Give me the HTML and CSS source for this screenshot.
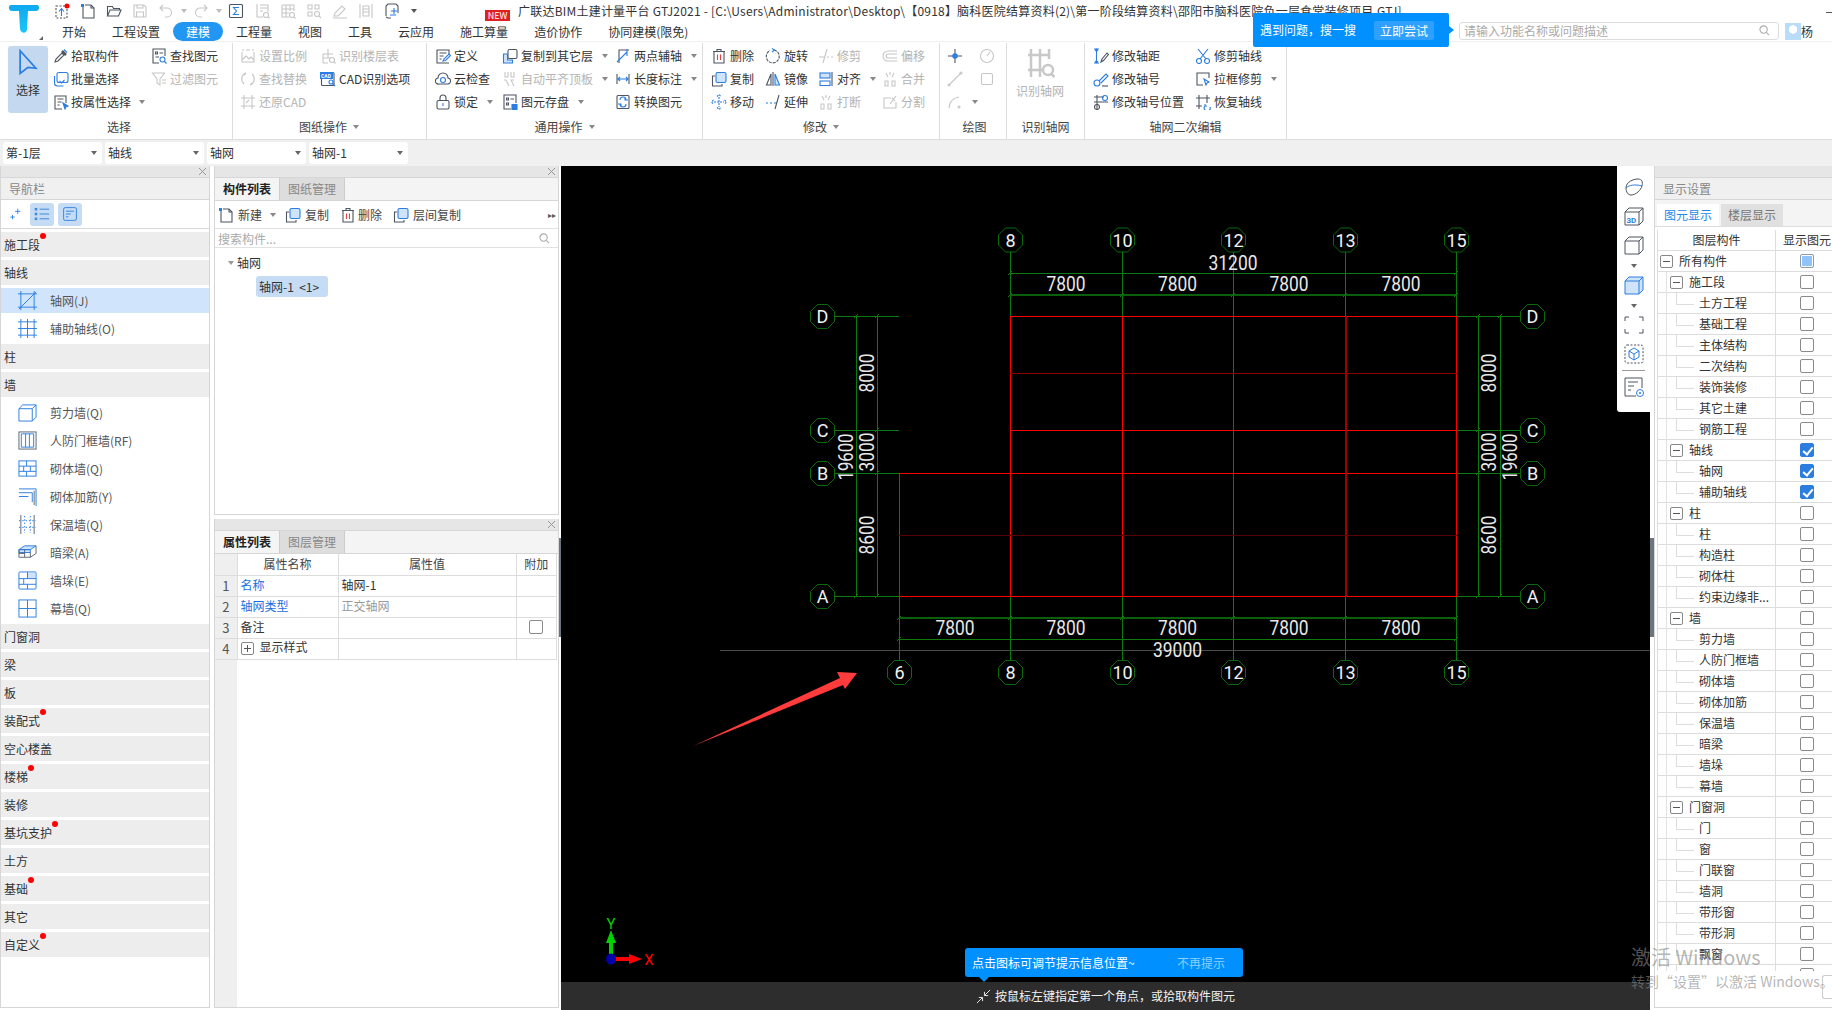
FILE: index.html
```html
<!DOCTYPE html>
<html lang="zh-CN">
  <head>
    <meta charset="UTF-8" />
    <title>广联达BIM土建计量平台 GTJ2021</title>
    <link rel="stylesheet" href="styles.css">
  </head>
  <body>
    <!-- icon sprite -->
    <svg class="sprite" width="0" height="0">
      <symbol id="i-pin" viewBox="0 0 16 16"><rect x="2" y="3" width="11" height="12" stroke-dasharray="2 1.5"/><path class="b" d="M7.5 13V6M5 8.500l2.500-3 2.500 3"/><circle cx="13" cy="3" r="2.500" fill="#f00" stroke="none"/></symbol>
      <symbol id="i-new" viewBox="0 0 16 16"><path d="M3 4v11h11V5l-3-3H5"/><path d="M11 2v3h3"/><rect x="1" y="1" width="3" height="3" fill="#2b7de0" stroke="none"/></symbol>
      <symbol id="i-open" viewBox="0 0 16 16"><path d="M1.500 13V3.500h5l1 2h6v2M1.500 13l2.500-6h11l-2.500 6z"/></symbol>
      <symbol id="i-save" viewBox="0 0 16 16"><path d="M2 2h10l2 2v10H2zM5 2v3h6V2M4.500 14V9h7v5"/></symbol>
      <symbol id="i-undo" viewBox="0 0 16 16"><path d="M5 2L2 5l3 3M2 5h7a4.500 4.500 0 010 9H7"/></symbol>
      <symbol id="i-redo" viewBox="0 0 16 16"><path d="M11 2l3 3-3 3M14 5H7a4.500 4.500 0 000 9h2"/></symbol>
      <symbol id="i-sum" viewBox="0 0 16 16"><rect x="1.500" y="1.500" width="13" height="13" rx="1"/><path class="b" d="M11 4.500H5.500L8.500 8l-3 3.500H11"/></symbol>
      <symbol id="i-tbl" viewBox="0 0 16 16"><path d="M3 1v13h6M6 2h8v7M6 5h8M6 8h3"/><circle cx="12" cy="12" r="2.500"/><path d="M14 14l1.500 1.500"/></symbol>
      <symbol id="i-gridq" viewBox="0 0 16 16"><path d="M2 2h12v6M2 2v12h7M6 2v12M10 2v6M2 6h12M2 10h7"/><circle cx="12" cy="12" r="2.500"/><path d="M14 14l1.500 1.500"/></symbol>
      <symbol id="i-gridq2" viewBox="0 0 16 16"><path d="M2 2h4v4H2zM9 2h4v4H9zM2 9h4v4H2z"/><circle cx="11" cy="11" r="2.500"/><path d="M13 13l2 2"/></symbol>
      <symbol id="i-pen" viewBox="0 0 16 16"><path d="M2 13l1-3 7-7 3 3-7 7zM1 15h14"/></symbol>
      <symbol id="i-cols" viewBox="0 0 16 16"><path d="M2 1v14M14 1v14M5 3h6v10H5zM5 6h6M5 9h6"/></symbol>
      <symbol id="i-frame" viewBox="0 0 16 16"><path d="M2 13V3l2-2h8l2 2v7M2 14l2 1h3"/><path class="b" d="M7 8h6M10 5v6M6 12h6"/></symbol>
      <symbol id="i-pick" viewBox="0 0 16 16"><path d="M2 14l1-3 6-6 2 2-6 6z"/><path d="M9 3l4 4" stroke-width="2.500"/><path class="b" d="M11 1.500l3 3"/></symbol>
      <symbol id="i-batch" viewBox="0 0 16 16"><rect class="b" x="4" y="1.500" width="11" height="10" rx="2"/><path class="b" d="M1.500 5v7c0 2 1 3 3 3h6M6.500 10l2 2 3-3"/></symbol>
      <symbol id="i-attr" viewBox="0 0 16 16"><path d="M13 9V2H2v13h7M4.500 5h6M4.500 8h4M4.500 11h2"/><path class="b" d="M10 9l5 3-2 .8-1 2.200z" fill="#2b7de0"/></symbol>
      <symbol id="i-find" viewBox="0 0 16 16"><path d="M8 15H2V1h12v7M4.500 4h2v2h-2zM8.500 5H12M4.500 9H8"/><circle class="b" cx="11.500" cy="11.500" r="2.500"/><path class="b" d="M13.500 13.500L15.500 15.500"/></symbol>
      <symbol id="i-filter" viewBox="0 0 16 16"><path d="M1.500 2h12L9 8v6l-3-2V8zM11 9h4M11 12h4"/></symbol>
      <symbol id="i-scale" viewBox="0 0 16 16"><path d="M2 4v10h12V4M2 2h2M6 2h4M12 2h2M2 12l4-4 3 3 2-2 3 3"/></symbol>
      <symbol id="i-floor" viewBox="0 0 16 16"><path d="M8 1v9M3 6h10M3 6v9M3 10h7M8 15H3"/><circle cx="12" cy="12" r="2.500"/><path d="M14 14l1.500 1.500"/></symbol>
      <symbol id="i-replace" viewBox="0 0 16 16"><path d="M6 2a6.500 6.500 0 00-2 11M10 14a6.500 6.500 0 002-11M6 2l-2 2M10 14l2-2"/></symbol>
      <symbol id="i-cad" viewBox="0 0 16 16"><rect x="1.500" y="1.500" width="12.500" height="13" rx="1"/><rect x="0" y="1" width="13" height="7" fill="#2b7de0" stroke="none"/><circle class="b" cx="11" cy="11" r="2"/><path class="b" d="M12.500 12.500L15 15"/></symbol>
      <symbol id="i-restore" viewBox="0 0 16 16"><path d="M4 1v14M12 1v14M1 4h14M1 12h14M6 9l3-3"/></symbol>
      <symbol id="i-define" viewBox="0 0 16 16"><path d="M14 6V2H2v13h12M4.500 5h7M4.500 8h4M4.500 11h2"/><path class="b" d="M8 13l1-2 5-5 1.500 1.500-5 5z"/></symbol>
      <symbol id="i-cloud" viewBox="0 0 16 16"><path d="M4 13a3 3 0 01-1-6 5 5 0 0110 0 3 3 0 01-1 6z"/><circle class="b" cx="8" cy="9" r="2.500"/></symbol>
      <symbol id="i-lock" viewBox="0 0 16 16"><rect x="2" y="6.500" width="12" height="8.500" rx="1.500"/><path d="M5 6.500V4a3 3 0 016 0v2.500"/><path class="b" d="M8 9v3"/></symbol>
      <symbol id="i-copyto" viewBox="0 0 16 16"><rect x="6" y="1.500" width="9" height="9" rx="1.500"/><path class="b" d="M1.500 6h4v6h5v3h-9z" fill="#cfe4fb"/></symbol>
      <symbol id="i-align" viewBox="0 0 16 16"><path d="M3 1v5h3V1M9 1v5h3V1M2 9h2l3 6M12 15l-3-6h3"/></symbol>
      <symbol id="i-store" viewBox="0 0 16 16"><path d="M9 15H2V1h12v8M4.500 4h2v2h-2zM8.500 5H12M4.500 9h2v2h-2z"/><rect class="b" x="10" y="10.500" width="5" height="5" fill="#2b7de0"/></symbol>
      <symbol id="i-twop" viewBox="0 0 16 16"><path d="M4 15V2h10"/><path class="b" d="M2 14L12 4M12 1v7"/></symbol>
      <symbol id="i-len" viewBox="0 0 16 16"><path d="M2 3v10M14 3v10"/><path class="b" d="M3 8h10M5 6L3 8l2 2M11 6l2 2-2 2"/></symbol>
      <symbol id="i-conv" viewBox="0 0 16 16"><rect x="2" y="1.500" width="12" height="13" rx="1"/><path class="b" d="M5 6a3 3 0 016 0M11 10a3 3 0 01-6 0M10 3v3h3M6 13v-3H3"/></symbol>
      <symbol id="i-del" viewBox="0 0 16 16"><path d="M2 3.500h12M6 3.500V1.500h4v2M3 3.500V15h10V3.500"/><path d="M6.500 6.500v5.500M9.500 6.500v5.500" stroke="#e04040"/></symbol>
      <symbol id="i-copy" viewBox="0 0 16 16"><rect class="b" x="5" y="1.500" width="10" height="10" rx="1.500" fill="#cfe4fb"/><path d="M4 5H1.500v10H11v-2"/></symbol>
      <symbol id="i-move" viewBox="0 0 16 16"><path class="b" d="M8 3v10M3 8h10M6 2.500L8 .5l2 2M6 13.500l2 2 2-2M2.500 6L.5 8l2 2M13.500 6l2 2-2 2" stroke-dasharray="2 1"/></symbol>
      <symbol id="i-rot" viewBox="0 0 16 16"><path d="M9 2a6.500 6.500 0 11-4 .5" stroke-dasharray="3 1"/><path class="b" d="M7 .5L9.500 2 7 4"/></symbol>
      <symbol id="i-mirror" viewBox="0 0 16 16"><path d="M8 1v14"/><path d="M6 3L1.500 14H6z"/><path class="b" d="M10 3l4.500 11H10z" fill="#cfe4fb"/></symbol>
      <symbol id="i-extend" viewBox="0 0 16 16"><path class="b" d="M1 9h2M5 9h2M9 9h3"/><path d="M10 15l4-14"/></symbol>
      <symbol id="i-trim" viewBox="0 0 16 16"><path d="M1 9h5M9 9h2M13 9h2M5 15l4-14"/></symbol>
      <symbol id="i-alignb" viewBox="0 0 16 16"><path d="M14 1v14"/><rect class="b" x="2" y="2" width="10" height="5" fill="#cfe4fb"/><rect class="b" x="2" y="10" width="10" height="4.500"/></symbol>
      <symbol id="i-break" viewBox="0 0 16 16"><path d="M3 15V10h3v5zM10 15V10h3v5zM4 2l2 4M12 2l-2 4M8 1v3"/></symbol>
      <symbol id="i-off" viewBox="0 0 16 16"><path d="M15 3H6a5 5 0 000 10h9M15 6H6a2 2 0 000 4h9"/></symbol>
      <symbol id="i-split" viewBox="0 0 16 16"><path d="M14 8v6H2V4h7M8 10l6-8M10 4l3 3"/></symbol>
      <symbol id="i-pt" viewBox="0 0 16 16"><path d="M1 8h5M10 8h5M8 1v5M8 10v5"/><circle class="b" cx="8" cy="8" r="2.200" fill="#2b7de0"/></symbol>
      <symbol id="i-dial" viewBox="0 0 16 16"><circle cx="8" cy="8" r="6.500"/><path d="M8 8l3-4"/></symbol>
      <symbol id="i-line" viewBox="0 0 16 16"><path d="M2 14L14 2"/><circle cx="14" cy="2" r="1"/><circle cx="2" cy="14" r="1"/></symbol>
      <symbol id="i-sq" viewBox="0 0 16 16"><rect x="2.500" y="2.500" width="11" height="11" rx="1.500"/></symbol>
      <symbol id="i-arc" viewBox="0 0 16 16"><path d="M2 14A11 11 0 0112 3"/><circle cx="12" cy="13" r="1"/></symbol>
      <symbol id="i-rec" viewBox="0 0 30 32"><path d="M6 2v28M15 2v28M3 8h21M3 23h14M24 2v10" stroke-width="2.500"/><circle cx="23" cy="23" r="5" stroke-width="2.500"/><path d="M26.500 27l3 3" stroke-width="2.500"/></symbol>
      <symbol id="i-dist" viewBox="0 0 16 16"><path class="b" d="M1 1h5M1 15h5M3.500 1v14M2 3l1.500-2L5 3M2 13l1.500 2L5 13"/><path d="M8 14l1-3 5-6 1.500 1.500-5 6z"/></symbol>
      <symbol id="i-num" viewBox="0 0 16 16"><circle class="b" cx="4" cy="12" r="3"/><path class="b" d="M6 10l7-7 2 2-7 7"/><path d="M9 15h6"/></symbol>
      <symbol id="i-numpos" viewBox="0 0 16 16"><path d="M1 3h10M1 8h14M4 1v14"/><circle class="b" cx="12" cy="4" r="2.500"/><circle cx="4" cy="13" r="2.500"/></symbol>
      <symbol id="i-scissor" viewBox="0 0 16 16"><path class="b" d="M3 1l8 10M13 1L5 11"/><circle class="b" cx="4" cy="13" r="2.500"/><circle class="b" cx="12" cy="13" r="2.500"/></symbol>
      <symbol id="i-box" viewBox="0 0 16 16"><path d="M14 7V2H2v12h6"/><path class="b" d="M9 8l5 3-2 1-1 2z"/></symbol>
      <symbol id="i-recov" viewBox="0 0 16 16"><path d="M4 1v14M12 1v8M1 4h14M1 12h6"/><path class="b" d="M10 12a3 3 0 105 1M10 10v2h2"/></symbol>
      <symbol id="i-sparkle" viewBox="0 0 16 16"><path class="b" d="M10 2v6M7 5h6M4 9v5M1.500 11.500h5"/></symbol>
      <symbol id="i-list" viewBox="0 0 20 20"><path class="b" d="M7 4h12M7 10h12M7 16h12"/><rect class="b" x="1.500" y="3" width="2" height="2"/><rect class="b" x="1.500" y="9" width="2" height="2"/><rect class="b" x="1.500" y="15" width="2" height="2"/></symbol>
      <symbol id="i-doc" viewBox="0 0 20 20"><rect class="b" x="2" y="2" width="16" height="16" rx="2"/><path class="b" d="M5 6.500h10M5 10h6M5 13.500h3"/></symbol>
      <symbol id="n-axis" viewBox="0 0 20 20"><path class="b" d="M0 3h20M0 17h20M3 0v20M17 0v20M1 19L19 1"/></symbol>
      <symbol id="n-aux" viewBox="0 0 20 20"><path class="b" d="M0 3h20M0 10h20M0 17h20M3 0v20M10 0v20M17 0v20"/></symbol>
      <symbol id="n-shear" viewBox="0 0 20 20"><path class="b" d="M1 6h14v13H1zM1 6l4-4h14v13l-4 4M15 6l4-4"/></symbol>
      <symbol id="n-door" viewBox="0 0 20 20"><rect x="1" y="1" width="18" height="18"/><path class="b" d="M3.500 3h13v14h-13zM8 3v14M12 3v14"/></symbol>
      <symbol id="n-brick" viewBox="0 0 20 20"><rect class="b" x="1" y="2" width="18" height="16"/><path class="b" d="M1 7.500h18M1 13h18M9 2v5.500M6 7.500V13M13 7.500V13M9 13v5"/></symbol>
      <symbol id="n-rebar" viewBox="0 0 20 20"><path class="b" d="M1 2h18v18M1 6h14v10M1 10h10"/><path d="M17 4v15"/></symbol>
      <symbol id="n-ins" viewBox="0 0 20 20"><path d="M3 0v20M17 0v20"/><path class="b" d="M7 1v18M13 1v18M1 6h18M1 13h18" stroke-dasharray="1.500 2"/></symbol>
      <symbol id="n-beam" viewBox="0 0 20 20"><path class="b" d="M1 7l6-4h12l-6 4zM1 7h12v3H1z" fill="#cfe4fb"/><path d="M19 3v8l-6 4M13 10v5H1V7M7 7v8M1 11h6"/></symbol>
      <symbol id="n-pier" viewBox="0 0 20 20"><rect class="b" x="1" y="1" width="18" height="18" rx="1"/><rect x="10" y="2" width="8" height="6" fill="#cfe4fb" stroke="none"/><path class="b" d="M1 8h18M1 14h18M10 1v7M10 14v5M6 8v6"/></symbol>
      <symbol id="n-curtain" viewBox="0 0 20 20"><rect class="b" x="1" y="1" width="18" height="18"/><path class="b" d="M1 10h18M10 1v18"/></symbol>
      <symbol id="f-ball" viewBox="0 0 20 20"><path d="M2 11C2 5 9 2 14 2c4 0 5 3 4 7s-6 9-11 9c-3 0-5-3-5-7z"/><path class="b" d="M2 11c3-3 9-4 16-2"/></symbol>
      <symbol id="f-cube" viewBox="0 0 20 20"><path d="M1 6h14v13H1zM1 6l4-4h14v13l-4 4M15 6l4-4"/></symbol>
      <symbol id="f-cubeb" viewBox="0 0 20 20"><path class="b" d="M1 6h14v13H1zM1 6l4-4h14v13l-4 4M15 6l4-4" fill="#cfe4fb"/></symbol>
      <symbol id="f-fit" viewBox="0 0 20 20"><path d="M1 6V2h4M15 2h4v4M19 14v4h-4M5 18H1v-4"/></symbol>
      <symbol id="f-iso" viewBox="0 0 20 20"><rect x="1" y="1" width="18" height="18" rx="2" stroke-dasharray="2 1.500"/><path class="b" d="M10 4l5 3v6l-5 3-5-3V7zM5 7l5 3 5-3M10 10v6"/></symbol>
      <symbol id="f-list" viewBox="0 0 20 20"><path d="M18 11V1H1v18h11M4 5h10M4 9h6M4 13h3"/><circle class="b" cx="16" cy="16" r="3.500"/><circle cx="16" cy="16" r="1" fill="#2b7de0" stroke="none"/></symbol>
    </svg>

    <header class="top">
      <div class="logo-col">
        <svg class="logo" viewBox="0 0 32 30">
          <defs>
            <linearGradient id="logoFill" x1="0" y1="0" x2="0" y2="1">
              <stop offset="0" stop-color="#10a8f0" />
              <stop offset="1" stop-color="#1ac6f5" />
            </linearGradient>
          </defs>
          <path fill="url(#logoFill)" d="M3 1h26c3 0 3 6-1 6h-8l-1 18c0 5-6 5-7 0L11 7H4C0 7 0 1 3 1z" />
        </svg>
        <i class="logo-mark"></i>
      </div>
      <div class="top-main">
        <div class="titlebar">
          <span class="qa"><svg class="ic"><use href="#i-pin" /></svg></span>
          <span class="qa"><svg class="ic"><use href="#i-new" /></svg></span>
          <span class="qa"><svg class="ic"><use href="#i-open" /></svg></span>
          <span class="qa dis"><svg class="ic"><use href="#i-save" /></svg></span>
          <span class="qa dis"><svg class="ic"><use href="#i-undo" /></svg></span>
          <span class="qa-more"><i class="caret lite"></i></span>
          <span class="qa dis"><svg class="ic"><use href="#i-redo" /></svg></span>
          <span class="qa-more"><i class="caret lite"></i></span>
          <span class="qa"><svg class="ic"><use href="#i-sum" /></svg></span>
          <span class="qa dis"><svg class="ic"><use href="#i-tbl" /></svg></span>
          <span class="qa dis"><svg class="ic"><use href="#i-gridq" /></svg></span>
          <span class="qa dis"><svg class="ic"><use href="#i-gridq2" /></svg></span>
          <span class="qa dis"><svg class="ic"><use href="#i-pen" /></svg></span>
          <span class="qa dis"><svg class="ic"><use href="#i-cols" /></svg></span>
          <span class="qa"><svg class="ic"><use href="#i-frame" /></svg></span>
          <span class="qa-end"><i class="caret"></i></span>
          <span class="new-badge">NEW</span>
          <span class="title-text">广联达BIM土建计量平台 GTJ2021 - [C:\Users\Administrator\Desktop\【0918】脑科医院结算资料(2)\第一阶段结算资料\邵阳市脑科医院负一层食堂装修项目.GTJ]</span>
          <i class="win-min"></i>
        </div>
        <nav class="menubar">
          <span>开始</span>
          <span>工程设置</span>
          <span class="active">建模</span>
          <span>工程量</span>
          <span>视图</span>
          <span>工具</span>
          <span>云应用</span>
          <span>施工算量</span>
          <span>造价协作</span>
          <span>协同建模(限免)</span>
          <div class="search-box">请输入功能名称或问题描述
            <svg class="search-ic" viewBox="0 0 12 12"><circle cx="5" cy="5" r="4" /><path d="M8 8l3 3" /></svg>
          </div>
          <div class="user"><i class="avatar"></i>杨</div>
        </nav>
      </div>
      <div class="tip-pop">
        <span>遇到问题，搜一搜</span>
        <span class="tip-btn">立即尝试</span>
      </div>
    </header>

    <section class="ribbon">
      <div class="group g-select">
        <div class="group-body">
          <div class="big-btn on">
            <svg class="big-arrow" viewBox="0 0 22 32"><path d="M2 2l18 20-9-1-9 7z" /></svg>
            <span>选择</span>
          </div>
          <div class="col w98 tight">
            <div class="tool"><svg class="ic"><use href="#i-pick" /></svg>拾取构件</div>
            <div class="tool"><svg class="ic"><use href="#i-batch" /></svg>批量选择</div>
            <div class="tool"><svg class="ic"><use href="#i-attr" /></svg>按属性选择<i class="caret"></i></div>
          </div>
          <div class="col">
            <div class="tool"><svg class="ic"><use href="#i-find" /></svg>查找图元</div>
            <div class="tool dis"><svg class="ic"><use href="#i-filter" /></svg>过滤图元</div>
          </div>
        </div>
        <div class="group-label">选择</div>
      </div>

      <div class="group g-drawing">
        <div class="group-body">
          <div class="col w80">
            <div class="tool dis"><svg class="ic"><use href="#i-scale" /></svg>设置比例</div>
            <div class="tool dis"><svg class="ic"><use href="#i-replace" /></svg>查找替换</div>
            <div class="tool dis"><svg class="ic"><use href="#i-restore" /></svg>还原CAD</div>
          </div>
          <div class="col">
            <div class="tool dis"><svg class="ic"><use href="#i-floor" /></svg>识别楼层表</div>
            <div class="tool"><svg class="ic" viewBox="0 0 16 16"><use href="#i-cad" /><text x="1" y="6.500" class="mini-t">CAD</text></svg>CAD识别选项</div>
          </div>
        </div>
        <div class="group-label">图纸操作<i class="caret"></i></div>
      </div>

      <div class="group g-common">
        <div class="group-body">
          <div class="col w67">
            <div class="tool"><svg class="ic"><use href="#i-define" /></svg>定义</div>
            <div class="tool"><svg class="ic"><use href="#i-cloud" /></svg>云检查</div>
            <div class="tool"><svg class="ic"><use href="#i-lock" /></svg>锁定<i class="caret"></i></div>
          </div>
          <div class="col w113">
            <div class="tool"><svg class="ic"><use href="#i-copyto" /></svg>复制到其它层<i class="caret"></i></div>
            <div class="tool dis"><svg class="ic"><use href="#i-align" /></svg>自动平齐顶板<i class="caret"></i></div>
            <div class="tool"><svg class="ic"><use href="#i-store" /></svg>图元存盘<i class="caret"></i></div>
          </div>
          <div class="col">
            <div class="tool"><svg class="ic"><use href="#i-twop" /></svg>两点辅轴<i class="caret"></i></div>
            <div class="tool"><svg class="ic"><use href="#i-len" /></svg>长度标注<i class="caret"></i></div>
            <div class="tool"><svg class="ic"><use href="#i-conv" /></svg>转换图元</div>
          </div>
        </div>
        <div class="group-label">通用操作<i class="caret"></i></div>
      </div>

      <div class="group g-edit">
        <div class="group-body">
          <div class="col w54">
            <div class="tool"><svg class="ic"><use href="#i-del" /></svg>删除</div>
            <div class="tool"><svg class="ic"><use href="#i-copy" /></svg>复制</div>
            <div class="tool"><svg class="ic"><use href="#i-move" /></svg>移动</div>
          </div>
          <div class="col w53">
            <div class="tool"><svg class="ic"><use href="#i-rot" /></svg>旋转</div>
            <div class="tool"><svg class="ic"><use href="#i-mirror" /></svg>镜像</div>
            <div class="tool"><svg class="ic"><use href="#i-extend" /></svg>延伸</div>
          </div>
          <div class="col w64">
            <div class="tool dis"><svg class="ic"><use href="#i-trim" /></svg>修剪</div>
            <div class="tool"><svg class="ic"><use href="#i-alignb" /></svg>对齐<i class="caret"></i></div>
            <div class="tool dis"><svg class="ic"><use href="#i-break" /></svg>打断</div>
          </div>
          <div class="col">
            <div class="tool dis"><svg class="ic"><use href="#i-off" /></svg>偏移</div>
            <div class="tool dis"><svg class="ic"><use href="#i-break" /></svg>合并</div>
            <div class="tool dis"><svg class="ic"><use href="#i-split" /></svg>分割</div>
          </div>
        </div>
        <div class="group-label">修改<i class="caret"></i></div>
      </div>

      <div class="group g-draw">
        <div class="group-body">
          <div class="col w32">
            <div class="tool"><svg class="ic"><use href="#i-pt" /></svg></div>
            <div class="tool dis"><svg class="ic"><use href="#i-line" /></svg></div>
            <div class="tool dis"><svg class="ic"><use href="#i-arc" /></svg><i class="caret"></i></div>
          </div>
          <div class="col">
            <div class="tool dis"><svg class="ic"><use href="#i-dial" /></svg></div>
            <div class="tool dis"><svg class="ic"><use href="#i-sq" /></svg></div>
          </div>
        </div>
        <div class="group-label">绘图</div>
      </div>

      <div class="group g-recog">
        <div class="group-body">
          <div class="big-btn dis wide">
            <svg class="rec-ic"><use href="#i-rec" /></svg>
            <span>识别轴网</span>
          </div>
        </div>
        <div class="group-label">识别轴网</div>
      </div>

      <div class="group g-axis">
        <div class="group-body">
          <div class="col w102">
            <div class="tool"><svg class="ic"><use href="#i-dist" /></svg>修改轴距</div>
            <div class="tool"><svg class="ic"><use href="#i-num" /></svg>修改轴号</div>
            <div class="tool"><svg class="ic"><use href="#i-numpos" /></svg>修改轴号位置</div>
          </div>
          <div class="col">
            <div class="tool"><svg class="ic"><use href="#i-scissor" /></svg>修剪轴线</div>
            <div class="tool"><svg class="ic"><use href="#i-box" /></svg>拉框修剪<i class="caret"></i></div>
            <div class="tool"><svg class="ic"><use href="#i-recov" /></svg>恢复轴线</div>
          </div>
        </div>
        <div class="group-label">轴网二次编辑</div>
      </div>
    </section>

    <div class="selectors">
      <div class="sel">第-1层<i class="caret dark"></i></div>
      <div class="sel">轴线<i class="caret dark"></i></div>
      <div class="sel">轴网<i class="caret dark"></i></div>
      <div class="sel">轴网-1<i class="caret dark"></i></div>
    </div>

    <main class="workspace">
      <aside class="nav panel">
        <div class="panel-bar"><i class="close"></i></div>
        <div class="panel-title">导航栏</div>
        <div class="nav-tools">
          <svg class="nav-ic plain"><use href="#i-sparkle" /></svg>
          <span class="nav-toggle"><svg class="ic"><use href="#i-list" /></svg></span>
          <span class="nav-toggle"><svg class="ic"><use href="#i-doc" /></svg></span>
        </div>
        <div class="nav-list">
          <div class="sec"><span class="has-dot">施工段</span></div>
          <div class="sec"><span>轴线</span></div>
          <div class="item active"><svg class="item-ic"><use href="#n-axis" /></svg>轴网(J)</div>
          <div class="item"><svg class="item-ic"><use href="#n-aux" /></svg>辅助轴线(O)</div>
          <div class="sec"><span>柱</span></div>
          <div class="sec"><span>墙</span></div>
          <div class="item"><svg class="item-ic"><use href="#n-shear" /></svg>剪力墙(Q)</div>
          <div class="item"><svg class="item-ic"><use href="#n-door" /></svg>人防门框墙(RF)</div>
          <div class="item"><svg class="item-ic"><use href="#n-brick" /></svg>砌体墙(Q)</div>
          <div class="item"><svg class="item-ic"><use href="#n-rebar" /></svg>砌体加筋(Y)</div>
          <div class="item"><svg class="item-ic"><use href="#n-ins" /></svg>保温墙(Q)</div>
          <div class="item"><svg class="item-ic"><use href="#n-beam" /></svg>暗梁(A)</div>
          <div class="item"><svg class="item-ic"><use href="#n-pier" /></svg>墙垛(E)</div>
          <div class="item"><svg class="item-ic"><use href="#n-curtain" /></svg>幕墙(Q)</div>
          <div class="sec"><span>门窗洞</span></div>
          <div class="sec"><span>梁</span></div>
          <div class="sec"><span>板</span></div>
          <div class="sec"><span class="has-dot">装配式</span></div>
          <div class="sec"><span>空心楼盖</span></div>
          <div class="sec"><span class="has-dot">楼梯</span></div>
          <div class="sec"><span>装修</span></div>
          <div class="sec"><span class="has-dot">基坑支护</span></div>
          <div class="sec"><span>土方</span></div>
          <div class="sec"><span class="has-dot">基础</span></div>
          <div class="sec"><span>其它</span></div>
          <div class="sec"><span class="has-dot">自定义</span></div>
        </div>
      </aside>

      <div class="mid">
        <section class="panel comp-panel">
          <div class="panel-bar"><i class="close"></i></div>
          <div class="tabs">
            <span class="tab active">构件列表</span>
            <span class="tab">图纸管理</span>
          </div>
          <div class="comp-tools">
            <span class="ct t-new"><svg class="ic"><use href="#i-new" /></svg>新建<i class="caret"></i></span>
            <span class="ct t-copy"><svg class="ic"><use href="#i-copy" /></svg>复制</span>
            <span class="ct t-del"><svg class="ic"><use href="#i-del" /></svg>删除</span>
            <span class="ct"><svg class="ic"><use href="#i-copy" /></svg>层间复制</span>
            <span class="ct-more">▸▸</span>
          </div>
          <div class="comp-search">搜索构件...
            <svg class="search-ic" viewBox="0 0 12 12"><circle cx="5" cy="5" r="4" /><path d="M8 8l3 3" /></svg>
          </div>
          <div class="comp-tree">
            <div class="tree-head"><i class="caret tree"></i>轴网</div>
            <div class="tree-pick">轴网-1&nbsp;&nbsp;&lt;1&gt;</div>
          </div>
        </section>

        <section class="panel prop-panel">
          <div class="panel-bar"><i class="close"></i></div>
          <div class="tabs">
            <span class="tab active">属性列表</span>
            <span class="tab">图层管理</span>
          </div>
          <table class="props">
            <tr><th class="idx"></th><th class="p-name">属性名称</th><th class="p-val">属性值</th><th class="p-add">附加</th></tr>
            <tr><td class="idx">1</td><td class="link">名称</td><td>轴网-1</td><td></td></tr>
            <tr><td class="idx">2</td><td class="link">轴网类型</td><td class="muted">正交轴网</td><td></td></tr>
            <tr><td class="idx">3</td><td>备注</td><td></td><td class="center"><i class="cb"></i></td></tr>
            <tr><td class="idx">4</td><td><i class="plus"></i>显示样式</td><td></td><td></td></tr>
          </table>
          <div class="prop-rest"><div class="prop-gutter"></div></div>
        </section>
      </div>

      <i class="splitter left"></i>

      <div class="canvas">
        <svg class="cad" viewBox="561 166 1089 816">
          <defs>
            <polygon id="bub" points="5,-12 12,-5 12,5 5,12 -5,12 -12,5 -12,-5 -5,-12" />
          </defs>
          <path class="c-grey" d="M720 650.500H1650" />
          <g class="c-green">
            <path d="M899.500 596V661M1010.500 252V316M1010.500 596V661M1122.500 252V316M1122.500 596V661M1233.500 252V316M1233.500 596V661M1345.500 252V316M1345.500 596V661M1456.500 252V316M1456.500 596V661" />
            <path d="M835 316.500H899M835 430.500H899M835 473.500H899M835 596.500H899M1457 316.500H1520M1457 430.500H1520M1457 473.500H1520M1457 596.500H1520" />
            <path d="M856.500 316V596M877.500 316V596M1478.500 316V596M1500.500 316V596" />
            <path d="M1010 273.500H1456M899 639.500H1456" />
            <path class="thick" d="M1010 295H1456M899 618H1456" />
            <path d="M1008 275l4-4M1008 297l4-4M1120 297l4-4M1231 297l4-4M1343 297l4-4M1454 275l4-4M1454 297l4-4M854 318l4-4M875 318l4-4M875 432l4-4M875 475l4-4M854 598l4-4M875 598l4-4M1476 318l4-4M1498 318l4-4M1476 432l4-4M1476 475l4-4M1476 598l4-4M1498 598l4-4M897 620l4-4M897 641l4-4M1008 620l4-4M1120 620l4-4M1231 620l4-4M1343 620l4-4M1454 620l4-4M1454 641l4-4" />
          </g>
          <g class="c-red">
            <path d="M1010 316.500H1457M1010 430.500H1457M899 473.500H1457M899 596.500H1457" />
            <path d="M899.500 473V597M1010.500 316V597M1122.500 316V597M1233.500 316V597M1456.500 316V597" />
            <path class="deep" d="M1345.500 316V597" />
            <path class="dim" d="M1010 373.500H1457" />
            <path class="dimmer" d="M899 535.500H1457" />
          </g>
          <g class="c-bubbles">
            <use href="#bub" x="1010.500" y="240" /><use href="#bub" x="1122.500" y="240" /><use href="#bub" x="1233.500" y="240" /><use href="#bub" x="1345.500" y="240" /><use href="#bub" x="1456.500" y="240" />
            <use href="#bub" x="899.500" y="672.500" /><use href="#bub" x="1010.500" y="672.500" /><use href="#bub" x="1122.500" y="672.500" /><use href="#bub" x="1233.500" y="672.500" /><use href="#bub" x="1345.500" y="672.500" /><use href="#bub" x="1456.500" y="672.500" />
            <use href="#bub" x="822.500" y="316.500" /><use href="#bub" x="822.500" y="430.500" /><use href="#bub" x="822.500" y="473.500" /><use href="#bub" x="822.500" y="596.500" />
            <use href="#bub" x="1532.500" y="316.500" /><use href="#bub" x="1532.500" y="430.500" /><use href="#bub" x="1532.500" y="473.500" /><use href="#bub" x="1532.500" y="596.500" />
          </g>
          <g class="c-label">
            <text x="1010.500" y="246.500">8</text><text x="1122.500" y="246.500">10</text><text x="1233.500" y="246.500">12</text><text x="1345.500" y="246.500">13</text><text x="1456.500" y="246.500">15</text>
            <text x="899.500" y="679">6</text><text x="1010.500" y="679">8</text><text x="1122.500" y="679">10</text><text x="1233.500" y="679">12</text><text x="1345.500" y="679">13</text><text x="1456.500" y="679">15</text>
            <text x="822.500" y="323">D</text><text x="822.500" y="437">C</text><text x="822.500" y="480">B</text><text x="822.500" y="603">A</text>
            <text x="1532.500" y="323">D</text><text x="1532.500" y="437">C</text><text x="1532.500" y="480">B</text><text x="1532.500" y="603">A</text>
          </g>
          <g class="c-dim">
            <text x="1233" y="270" textLength="49" lengthAdjust="spacingAndGlyphs">31200</text>
            <text x="1066" y="291" textLength="39" lengthAdjust="spacingAndGlyphs">7800</text>
            <text x="1177.500" y="291" textLength="39" lengthAdjust="spacingAndGlyphs">7800</text>
            <text x="1289" y="291" textLength="39" lengthAdjust="spacingAndGlyphs">7800</text>
            <text x="1401" y="291" textLength="39" lengthAdjust="spacingAndGlyphs">7800</text>
            <text x="955" y="635" textLength="39" lengthAdjust="spacingAndGlyphs">7800</text>
            <text x="1066" y="635" textLength="39" lengthAdjust="spacingAndGlyphs">7800</text>
            <text x="1177.500" y="635" textLength="39" lengthAdjust="spacingAndGlyphs">7800</text>
            <text x="1289" y="635" textLength="39" lengthAdjust="spacingAndGlyphs">7800</text>
            <text x="1401" y="635" textLength="39" lengthAdjust="spacingAndGlyphs">7800</text>
            <text x="1177.500" y="657" textLength="49" lengthAdjust="spacingAndGlyphs">39000</text>
            <text transform="translate(874 373) rotate(-90)" textLength="39" lengthAdjust="spacingAndGlyphs">8000</text>
            <text transform="translate(874 452) rotate(-90)" textLength="39" lengthAdjust="spacingAndGlyphs">3000</text>
            <text transform="translate(874 535) rotate(-90)" textLength="39" lengthAdjust="spacingAndGlyphs">8600</text>
            <text transform="translate(852.500 457) rotate(-90)" textLength="47" lengthAdjust="spacingAndGlyphs">19600</text>
            <text transform="translate(1495.500 373) rotate(-90)" textLength="39" lengthAdjust="spacingAndGlyphs">8000</text>
            <text transform="translate(1495.500 452) rotate(-90)" textLength="39" lengthAdjust="spacingAndGlyphs">3000</text>
            <text transform="translate(1495.500 535) rotate(-90)" textLength="39" lengthAdjust="spacingAndGlyphs">8600</text>
            <text transform="translate(1517 457) rotate(-90)" textLength="47" lengthAdjust="spacingAndGlyphs">19600</text>
          </g>
          <polygon class="c-arrow" points="693,746 840,678 837,672 857,673 845,689 843,685" />
          <rect class="ax-g" x="609" y="942" width="4" height="17" />
          <polygon class="ax-g" points="611,930 616,943 606,943" />
          <rect class="ax-r" x="611" y="957" width="20" height="4" />
          <polygon class="ax-r" points="642,959 629,954 629,964" />
          <ellipse cx="611" cy="959" rx="5" ry="5.500" fill="#0000a8" />
          <text class="ax-t green" x="611" y="929">Y</text>
          <text class="ax-t red" x="649" y="965">X</text>
        </svg>
        <div class="statusbar">
          <svg class="status-ic" viewBox="0 0 16 16"><path d="M15 1L9 7M9 3v4h4M1 15l6-6M3 9h4v4" /></svg>
          <span>按鼠标左键指定第一个角点，或拾取构件图元</span>
        </div>
        <div class="hint">
          <span>点击图标可调节提示信息位置~</span>
          <span class="hint-off">不再提示</span>
        </div>
        <div class="float-bar">
          <svg class="fb-ic"><use href="#f-ball" /></svg>
          <svg class="fb-ic" viewBox="0 0 20 20"><use href="#f-cube" /><text x="2.500" y="16.500" class="mini-b">3D</text></svg>
          <svg class="fb-ic"><use href="#f-cube" /></svg>
          <i class="caret dark fb-caret"></i>
          <svg class="fb-ic"><use href="#f-cubeb" /></svg>
          <i class="caret dark fb-caret"></i>
          <svg class="fb-ic"><use href="#f-fit" /></svg>
          <svg class="fb-ic"><use href="#f-iso" /></svg>
          <i class="fb-sep"></i>
          <svg class="fb-ic"><use href="#f-list" /></svg>
        </div>
      </div>

      <i class="splitter right"></i>

      <aside class="layers panel">
        <div class="panel-bar"></div>
        <div class="panel-title">显示设置</div>
        <div class="layer-tabs">
          <span class="ltab active">图元显示</span>
          <span class="ltab">楼层显示</span>
        </div>
        <div class="layer-table">
          <div class="row head"><span class="nm">图层构件</span><span class="chk">显示图元</span></div>
          <div class="row l1"><span class="nm"><i class="exp"></i>所有构件</span><span class="chk"><i class="cb part"></i></span></div>
          <div class="row l2"><span class="nm"><i class="exp"></i>施工段</span><span class="chk"><i class="cb"></i></span></div>
          <div class="row l3"><span class="nm">土方工程</span><span class="chk"><i class="cb"></i></span></div>
          <div class="row l3"><span class="nm">基础工程</span><span class="chk"><i class="cb"></i></span></div>
          <div class="row l3"><span class="nm">主体结构</span><span class="chk"><i class="cb"></i></span></div>
          <div class="row l3"><span class="nm">二次结构</span><span class="chk"><i class="cb"></i></span></div>
          <div class="row l3"><span class="nm">装饰装修</span><span class="chk"><i class="cb"></i></span></div>
          <div class="row l3"><span class="nm">其它土建</span><span class="chk"><i class="cb"></i></span></div>
          <div class="row l3 last"><span class="nm">钢筋工程</span><span class="chk"><i class="cb"></i></span></div>
          <div class="row l2"><span class="nm"><i class="exp"></i>轴线</span><span class="chk"><i class="cb on"></i></span></div>
          <div class="row l3"><span class="nm">轴网</span><span class="chk"><i class="cb on"></i></span></div>
          <div class="row l3 last"><span class="nm">辅助轴线</span><span class="chk"><i class="cb on"></i></span></div>
          <div class="row l2"><span class="nm"><i class="exp"></i>柱</span><span class="chk"><i class="cb"></i></span></div>
          <div class="row l3"><span class="nm">柱</span><span class="chk"><i class="cb"></i></span></div>
          <div class="row l3"><span class="nm">构造柱</span><span class="chk"><i class="cb"></i></span></div>
          <div class="row l3"><span class="nm">砌体柱</span><span class="chk"><i class="cb"></i></span></div>
          <div class="row l3 last"><span class="nm">约束边缘非...</span><span class="chk"><i class="cb"></i></span></div>
          <div class="row l2"><span class="nm"><i class="exp"></i>墙</span><span class="chk"><i class="cb"></i></span></div>
          <div class="row l3"><span class="nm">剪力墙</span><span class="chk"><i class="cb"></i></span></div>
          <div class="row l3"><span class="nm">人防门框墙</span><span class="chk"><i class="cb"></i></span></div>
          <div class="row l3"><span class="nm">砌体墙</span><span class="chk"><i class="cb"></i></span></div>
          <div class="row l3"><span class="nm">砌体加筋</span><span class="chk"><i class="cb"></i></span></div>
          <div class="row l3"><span class="nm">保温墙</span><span class="chk"><i class="cb"></i></span></div>
          <div class="row l3"><span class="nm">暗梁</span><span class="chk"><i class="cb"></i></span></div>
          <div class="row l3"><span class="nm">墙垛</span><span class="chk"><i class="cb"></i></span></div>
          <div class="row l3 last"><span class="nm">幕墙</span><span class="chk"><i class="cb"></i></span></div>
          <div class="row l2"><span class="nm"><i class="exp"></i>门窗洞</span><span class="chk"><i class="cb"></i></span></div>
          <div class="row l3"><span class="nm">门</span><span class="chk"><i class="cb"></i></span></div>
          <div class="row l3"><span class="nm">窗</span><span class="chk"><i class="cb"></i></span></div>
          <div class="row l3"><span class="nm">门联窗</span><span class="chk"><i class="cb"></i></span></div>
          <div class="row l3"><span class="nm">墙洞</span><span class="chk"><i class="cb"></i></span></div>
          <div class="row l3"><span class="nm">带形窗</span><span class="chk"><i class="cb"></i></span></div>
          <div class="row l3"><span class="nm">带形洞</span><span class="chk"><i class="cb"></i></span></div>
          <div class="row l3"><span class="nm">飘窗</span><span class="chk"><i class="cb"></i></span></div>
          <div class="row l3"><span class="nm"></span><span class="chk"><i class="cb"></i></span></div>
        </div>
        <i class="corner-btn"></i>
      </aside>
    </main>

    <div class="watermark">
      <div class="wm-big">激活 Windows</div>
      <div class="wm-small">转到“设置”以激活 Windows。</div>
    </div>
  </body>
</html>
```

FILE: styles.css
```css
* {
  box-sizing: border-box;
}
html,
body {
  margin: 0;
  height: 100%;
}
body {
  width: 1832px;
  height: 1010px;
  overflow: hidden;
  position: relative;
  display: flex;
  flex-direction: column;
  background-color: #fff;
  color: #333;
  font: 12px/1 "Noto Sans CJK SC", "Noto Sans", sans-serif;
  --accent: #2b7de0;
}
i {
  font-style: normal;
}
.sprite {
  position: absolute;
}
.b {
  stroke: var(--accent);
}
.mini-t {
  font: 700 5px Roboto, sans-serif;
  fill: #fff;
  stroke: none;
}
.mini-b {
  font: 700 8px Roboto, sans-serif;
  fill: #2b7de0;
  stroke: none;
}
.ic {
  width: 16px;
  height: 16px;
  flex: none;
  fill: none;
  stroke: #4d5561;
  stroke-width: 1.1;
}
.dis {
  --accent: #c6c6c6;
  color: #b4b4b4;
}
.dis .ic {
  stroke: #c6c6c6;
}
.caret {
  display: inline-block;
  width: 0;
  height: 0;
  margin-left: 6px;
  border-left: 3.5px solid transparent;
  border-right: 3.5px solid transparent;
  border-top: 4px solid #888;
  vertical-align: middle;
}
.caret.lite {
  border-top-color: #bbb;
  margin: 0;
}
.caret.dark {
  border-top-color: #666;
}

/* title + menu */
.top {
  height: 41px;
  display: flex;
  flex: none;
  position: relative;
}
.logo-col {
  width: 49px;
  flex: none;
  position: relative;
}
.logo {
  display: block;
  width: 32px;
  height: 30px;
  margin: 4px 0 0 8px;
}
.logo-mark {
  position: absolute;
  left: 39px;
  top: 36px;
  border-left: 4px solid transparent;
  border-bottom: 4px solid #666;
}
.top-main {
  flex: 1;
  min-width: 0;
}
.titlebar {
  height: 22px;
  display: flex;
  align-items: center;
  white-space: nowrap;
}
.qa {
  width: 26px;
  height: 20px;
  display: flex;
  justify-content: center;
  align-items: center;
}
.qa-more {
  width: 9px;
  display: flex;
  justify-content: center;
}
.qa-end {
  width: 18px;
  display: flex;
  justify-content: center;
}
.qa-end .caret {
  margin: 0;
  border-top-color: #555;
}
.new-badge {
  margin-left: 62px;
  width: 25px;
  height: 11px;
  margin-top: 9px;
  background-color: #e02020;
  color: #fff;
  font-size: 9px;
  line-height: 11px;
  text-align: center;
}
.title-text {
  margin-left: 8px;
  font-size: 12px;
  letter-spacing: 0.22px;
  color: #333;
}
.win-min {
  position: absolute;
  right: 0;
  top: 12px;
  width: 6px;
  height: 1px;
  background-color: #555;
}
.menubar {
  height: 19px;
  display: flex;
  align-items: center;
  gap: 26px;
  padding-left: 13px;
  white-space: nowrap;
  color: #333;
}
.menubar .active {
  margin: 0 -13px;
  padding: 0 13px;
  line-height: 19px;
  border-radius: 10px;
  background-color: #2196f3;
  color: #fff;
}
.search-box {
  margin-left: auto;
  margin-top: -2px;
  width: 320px;
  height: 18px;
  padding-left: 4px;
  line-height: 16px;
  border: 1px solid #ddd;
  border-radius: 3px;
  color: #aaa;
  display: flex;
  align-items: center;
  justify-content: space-between;
  padding-right: 8px;
}
.search-ic {
  width: 11px;
  height: 11px;
  fill: none;
  stroke: #aaa;
  stroke-width: 1.2;
  flex: none;
}
.user {
  display: flex;
  align-items: center;
  width: 47px;
  margin-left: -20px;
  padding-right: 19px;
}
.avatar {
  width: 16px;
  height: 17px;
  background: radial-gradient(circle at 50% 38%, #fff 30%, #b9dcfb 34%);
}
.tip-pop {
  position: absolute;
  left: 1253px;
  top: 13px;
  width: 196px;
  height: 34px;
  padding-left: 7px;
  display: flex;
  align-items: center;
  gap: 18px;
  border-radius: 2px;
  background-color: #0090ff;
  color: #fff;
  z-index: 2;
}
.tip-pop::after {
  content: "";
  position: absolute;
  right: -5px;
  top: 13px;
  border-left: 5px solid #0090ff;
  border-top: 4px solid transparent;
  border-bottom: 4px solid transparent;
}
.tip-btn {
  width: 60px;
  height: 19px;
  line-height: 19px;
  text-align: center;
  background-color: #2ea0ff;
  border-radius: 2px;
}

/* ribbon */
.ribbon {
  height: 99px;
  flex: none;
  display: flex;
  border-top: 1px solid #f0f0f0;
  border-bottom: 1px solid #ddd;
}
.group {
  height: 97px;
  margin-top: 1px;
  display: flex;
  flex-direction: column;
  border-right: 1px solid #ddd;
  flex: none;
  padding-top: 1px;
}
.g-select {
  width: 233px;
  padding-left: 8px;
}
.g-drawing {
  width: 194px;
  padding-left: 7px;
}
.g-common {
  width: 276px;
  padding-left: 8px;
}
.g-edit {
  width: 237px;
  padding-left: 8px;
}
.g-draw {
  width: 67px;
  padding-left: 7px;
}
.g-recog {
  width: 78px;
}
.g-axis {
  width: 202px;
  padding-left: 8px;
}
.group-body {
  height: 71px;
  display: flex;
}
.group-label {
  flex: 1;
  display: flex;
  align-items: center;
  justify-content: center;
  margin-left: -8px;
  padding-bottom: 2px;
  color: #444;
}
.g-select .group-label {
  margin-left: -2px;
}
.g-draw .group-label {
  margin-left: -4px;
}
.g-recog .group-label {
  margin-left: 0;
}
.col {
  display: flex;
  flex-direction: column;
  flex: none;
}
.w32 {
  width: 32px;
}
.w53 {
  width: 53px;
}
.w54 {
  width: 54px;
}
.w64 {
  width: 64px;
}
.w67 {
  width: 67px;
}
.w80 {
  width: 80px;
}
.w98 {
  width: 98px;
}
.w102 {
  width: 102px;
}
.w113 {
  width: 113px;
}
.tool {
  height: 23px;
  display: flex;
  align-items: center;
  gap: 3px;
  white-space: nowrap;
}
.tight .tool {
  gap: 2px;
}
.big-btn {
  width: 40px;
  height: 67px;
  margin: 2px 5px 0 0;
  border-radius: 3px;
  display: flex;
  flex-direction: column;
  align-items: center;
  gap: 7px;
  padding-top: 3px;
}
.big-btn.on {
  background-color: #c4d9ef;
}
.big-arrow {
  width: 20px;
  height: 28px;
  fill: none;
  stroke: #2b7de0;
  stroke-width: 2;
}
.big-btn.wide {
  width: 66px;
  margin: 0;
  gap: 6px;
  padding-top: 3px;
}
.rec-ic {
  width: 30px;
  height: 32px;
  fill: none;
  stroke: #c8c8c8;
}

/* layer / type selectors */
.selectors {
  height: 26px;
  flex: none;
  display: flex;
  gap: 3px;
  align-items: center;
  padding-left: 3px;
  background-color: #f0f0f0;
}
.sel {
  width: 99px;
  height: 22px;
  padding: 0 5px 0 3px;
  display: flex;
  align-items: center;
  justify-content: space-between;
  background-color: #fff;
  border-radius: 3px;
}

/* panels */
.workspace {
  flex: 1;
  display: flex;
  min-height: 0;
}
.panel {
  display: flex;
  flex-direction: column;
  border: 1px solid #d6d6d6;
  background-color: #fff;
}
.panel-bar {
  height: 12px;
  flex: none;
  background-color: #e6e6e6;
  border-bottom: 1px solid #d6d6d6;
  position: relative;
}
.close {
  position: absolute;
  right: 3px;
  top: 2px;
  width: 7px;
  height: 7px;
  background:
    linear-gradient(45deg, transparent 45%, #999 45%, #999 55%, transparent 55%),
    linear-gradient(-45deg, transparent 45%, #999 45%, #999 55%, transparent 55%);
}
.panel-title {
  height: 22px;
  flex: none;
  padding-left: 8px;
  line-height: 21px;
  color: #888;
  background-color: #f0f0f0;
  border-bottom: 1px solid #d6d6d6;
}
.nav {
  width: 210px;
  height: 842px;
  flex: none;
  border-top: none;
}
.nav-tools {
  height: 29px;
  flex: none;
  display: flex;
  align-items: center;
  padding-left: 8px;
  gap: 4px;
  border-bottom: 1px solid #d6d6d6;
}
.nav-ic.plain {
  width: 14px;
  height: 14px;
  fill: none;
  margin-right: 3px;
}
.nav-toggle {
  width: 24px;
  height: 23px;
  border-radius: 3px;
  background-color: #c5dcf4;
  display: flex;
  align-items: center;
  justify-content: center;
}
.nav-list {
  padding-top: 3px;
  display: flex;
  flex-direction: column;
  gap: 3px;
}
.sec,
.item {
  height: 25px;
  flex: none;
  display: flex;
  align-items: center;
  padding-left: 3px;
}
.sec {
  background-color: #ededed;
}
.has-dot {
  position: relative;
}
.has-dot::after {
  content: "";
  position: absolute;
  right: -6px;
  top: -6px;
  width: 6px;
  height: 6px;
  border-radius: 50%;
  background-color: #f00;
}
.item {
  padding-left: 17px;
  gap: 13px;
  color: #555;
}
.item.active {
  background-color: #d0e5fb;
}
.item-ic {
  width: 19px;
  height: 19px;
  fill: none;
  stroke: #5a6470;
  stroke-width: 1;
}
.mid {
  width: 345px;
  flex: none;
  margin-left: 4px;
  display: flex;
  flex-direction: column;
  gap: 4px;
  height: 842px;
}
.comp-panel {
  height: 349px;
  flex: none;
  border-top: none;
}
.prop-panel {
  flex: 1;
  min-height: 0;
  border-top: none;
}
.tabs {
  height: 23px;
  flex: none;
  display: flex;
  background-color: #f4f4f4;
  border-bottom: 1px solid #d6d6d6;
}
.tab {
  width: 65px;
  height: 22px;
  line-height: 21px;
  text-align: center;
  background-color: #ddd;
  color: #888;
  border-right: 1px solid #ccc;
}
.tab.active {
  background-color: #f4f4f4;
  color: #222;
  font-weight: 700;
}
.comp-tools {
  height: 28px;
  flex: none;
  display: flex;
  align-items: center;
  padding-left: 3px;
  color: #444;
  border-bottom: 1px solid #e2e2e2;
  position: relative;
}
.ct {
  display: flex;
  align-items: center;
  gap: 4px;
}
.t-new {
  margin-right: 9px;
}
.t-new .caret {
  margin-left: 4px;
}
.t-copy {
  margin-right: 11px;
}
.t-del {
  margin-right: 11px;
  gap: 2px;
}
.ct-more {
  margin-left: auto;
  margin-right: 2px;
  font-size: 8px;
  color: #555;
}
.comp-search {
  height: 19px;
  flex: none;
  padding: 0 8px 0 3px;
  color: #aaa;
  display: flex;
  align-items: center;
  justify-content: space-between;
  border-bottom: 1px solid #e2e2e2;
  line-height: 21px;
}
.tree-head {
  display: flex;
  align-items: center;
  height: 18px;
  margin-top: 6px;
  padding-left: 13px;
}
.caret.tree {
  margin: 0 3px 0 0;
  border-top-color: #999;
}
.tree-pick {
  width: 72px;
  height: 21px;
  margin: 4px 0 0 41px;
  padding-left: 3px;
  line-height: 21px;
  background-color: #c5dcf4;
  border-radius: 3px;
  white-space: nowrap;
}
.props {
  width: 342px;
  border-collapse: collapse;
  table-layout: fixed;
  flex: none;
}
.props th,
.props td {
  height: 21px;
  padding: 0 3px 1px;
  border: 1px solid #ddd;
  font-weight: 400;
  border-top: none;
}
.props tr > :first-child {
  border-left: none;
}
.props th {
  color: #444;
  text-align: center;
}
.props .idx {
  width: 22px;
  background-color: #efefef;
  text-align: center;
  font-size: 13px;
  color: #555;
}
.p-name {
  width: 101px;
}
.p-val {
  width: 178px;
}
.props .link {
  color: #1a6fe0;
}
.props .muted {
  color: #999;
}
.props .center {
  text-align: center;
}
.plus {
  display: inline-block;
  width: 13px;
  height: 13px;
  margin-right: 6px;
  border: 1px solid #888;
  border-radius: 2px;
  vertical-align: middle;
  background:
    linear-gradient(#555, #555) center / 7px 1px no-repeat,
    linear-gradient(#555, #555) center / 1px 7px no-repeat;
}
.prop-rest {
  flex: 1;
}
.prop-gutter {
  width: 22px;
  height: 100%;
  background-color: #efefef;
}
.cb {
  display: inline-block;
  width: 14px;
  height: 14px;
  border: 1px solid #8a8a8a;
  border-radius: 2px;
  vertical-align: middle;
  background-color: #fff;
}
.cb.part {
  border-color: #8a9ab0;
  background: #8fc4fb content-box;
  padding: 1px;
}
.cb.on {
  border-color: #2b7de0;
  background-color: #2b7de0;
  position: relative;
}
.cb.on::after {
  content: "";
  position: absolute;
  left: 3.5px;
  top: 1px;
  width: 4px;
  height: 8px;
  border: solid #fff;
  border-width: 0 2px 2px 0;
  transform: rotate(40deg);
}

/* drawing area */
.splitter {
  flex: none;
}
.splitter.left {
  width: 2px;
  height: 99px;
  margin-top: 372px;
  background-color: #6a7580;
}
.splitter.right {
  width: 4px;
  height: 99px;
  margin-top: 372px;
  background-color: #6a7580;
}
.canvas {
  width: 1089px;
  flex: none;
  position: relative;
  display: flex;
  flex-direction: column;
  background-color: #000;
}
.cad {
  display: block;
  width: 1089px;
  height: 816px;
  flex: none;
  font-family: Roboto, sans-serif;
}
.c-grey {
  stroke: #4a4a4a;
  fill: none;
}
.c-green path {
  stroke: #0c7a0c;
  fill: none;
  shape-rendering: crispEdges;
}
.c-green .thick {
  stroke-width: 2;
  stroke: #0a5f0a;
}
.c-red path {
  stroke: #f00;
  fill: none;
  shape-rendering: crispEdges;
}
.c-red .deep {
  stroke: #a00000;
  stroke-width: 2;
}
.c-red .dim {
  stroke: #8a0000;
}
.c-red .dimmer {
  stroke: #5a0000;
}
.c-bubbles use {
  fill: #000;
  stroke: #0a6a0a;
  stroke-width: 1;
}
.c-label text {
  fill: #f2f2f2;
  font-size: 18px;
  text-anchor: middle;
}
.c-dim text {
  fill: #e8e8e8;
  font-size: 19.500px;
  text-anchor: middle;
}
.c-arrow {
  fill: #ff3b3b;
}
.ax-g {
  fill: #00d000;
}
.ax-r {
  fill: #f00;
}
.ax-t {
  font-size: 15px;
  text-anchor: middle;
}
.ax-t.green {
  fill: #00d000;
}
.ax-t.red {
  fill: #f00;
}
.statusbar {
  flex: 1;
  display: flex;
  align-items: center;
  padding-left: 415px;
  gap: 4px;
  background-color: #2d2d2d;
  color: #f2f2f2;
}
.status-ic {
  width: 15px;
  height: 15px;
  fill: none;
  stroke: #eee;
}
.hint {
  position: absolute;
  left: 404px;
  bottom: 33px;
  width: 278px;
  height: 29px;
  padding: 0 18px 0 7px;
  display: flex;
  align-items: center;
  justify-content: space-between;
  border-radius: 3px;
  background-color: #0090ff;
  color: #fff;
}
.hint::after {
  content: "";
  position: absolute;
  left: 14px;
  bottom: -5px;
  border-top: 5px solid #0090ff;
  border-left: 5px solid transparent;
  border-right: 5px solid transparent;
}
.hint-off {
  color: #8fd0ff;
}
.float-bar {
  position: absolute;
  right: 0;
  top: 0;
  width: 33px;
  height: 246px;
  padding-top: 11px;
  display: flex;
  flex-direction: column;
  align-items: center;
  background-color: #fff;
  border-bottom-left-radius: 3px;
}
.fb-ic {
  width: 20px;
  height: 20px;
  flex: none;
  margin-bottom: 9px;
  fill: none;
  stroke: #4d5561;
}
.fb-caret {
  margin: 0 0 7px;
}
.fb-sep {
  width: 23px;
  height: 1px;
  flex: none;
  margin: -3px 0 6px;
  background-color: #999;
}

/* right side tree */
.layers {
  flex: 1;
  min-width: 0;
  height: 842px;
  border-top: none;
  border-right: none;
  position: relative;
  overflow: hidden;
}
.layer-tabs {
  height: 27px;
  flex: none;
  display: flex;
  gap: 2px;
  align-items: flex-end;
  padding-left: 2px;
  border-bottom: 1px solid #ddd;
  background-color: #f4f4f4;
}
.ltab {
  width: 62px;
  height: 22px;
  line-height: 22px;
  text-align: center;
  background-color: #e0e0e0;
  color: #777;
}
.ltab.active {
  background-color: #fff;
  color: #1e88e5;
}
.layer-table {
  width: 181px;
  height: 741px;
  margin: 3px 0 0 2px;
  overflow: hidden;
  border-left: 1px solid #ddd;
}
.row {
  height: 21px;
  display: flex;
  border-bottom: 1px solid #ddd;
  position: relative;
}
.row.head .nm {
  justify-content: center;
  padding: 0;
}
.row.head .chk {
  justify-content: flex-start;
  padding-left: 7px;
}
.nm {
  width: 118px;
  flex: none;
  display: flex;
  align-items: center;
  gap: 6px;
  border-right: 1px solid #ddd;
  white-space: nowrap;
}
.chk {
  flex: 1;
  display: flex;
  align-items: center;
  justify-content: center;
  white-space: nowrap;
}
.exp {
  width: 13px;
  height: 13px;
  flex: none;
  border: 1px solid #888;
  border-radius: 2px;
  background: linear-gradient(#555, #555) center / 7px 1px no-repeat;
}
.l1 .nm {
  padding-left: 2px;
}
.l2 .nm {
  padding-left: 12px;
}
.l2::before,
.l3::before {
  content: "";
  position: absolute;
  left: 8px;
  top: 0;
  height: 21px;
  border-left: 1px solid #e2e2e2;
}
.l3 .nm {
  padding-left: 41px;
}
.l3::after {
  content: "";
  position: absolute;
  left: 18px;
  top: -1px;
  width: 17px;
  height: 12px;
  border-left: 1px solid #ddd;
  border-bottom: 1px solid #ddd;
}
.corner-btn {
  position: absolute;
  right: 0;
  bottom: 8px;
  width: 10px;
  height: 24px;
  border: 1px solid #ccc;
  border-right: none;
  border-radius: 3px 0 0 3px;
}
.watermark {
  position: absolute;
  left: 1631px;
  top: 945px;
  color: rgba(135, 135, 135, 0.62);
  white-space: nowrap;
  pointer-events: none;
}
.wm-big {
  font: 20px/24px "Noto Sans CJK SC", "Noto Sans", sans-serif;
}
.wm-small {
  font: 14px/18px "Noto Sans CJK SC", "Noto Sans", sans-serif;
  margin-top: 3px;
}
```
